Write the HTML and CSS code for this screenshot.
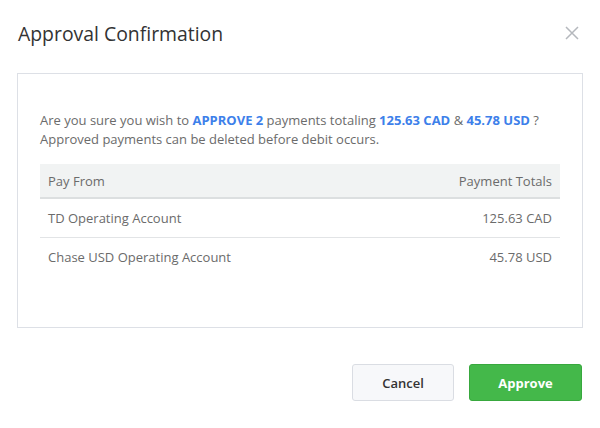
FILE: index.html
```html
<!DOCTYPE html>
<html lang="en">

<head>
  <meta charset="UTF-8">
  <meta name="viewport" content="width=device-width, initial-scale=1.0">
  <title>Approval Confirmation</title>
  <link rel="stylesheet" href="styles.css">
</head>

<body>
  <div class="modal">
    <div class="modal-header">
      <h1 class="modal-title">Approval Confirmation</h1>
      <button class="close-btn" aria-label="Close">
        <svg width="14" height="14" viewBox="0 0 14 14">
          <path d="M1 1 L13 13 M13 1 L1 13" stroke="#b5b8bd" stroke-width="1.5" fill="none" />
        </svg>
      </button>
    </div>

    <div class="modal-body">
      <p class="message">
        Are you sure you wish to <strong>APPROVE 2</strong> payments totaling <strong>125.63 CAD</strong> &amp; <strong>45.78 USD</strong> ?<br>
        Approved payments can be deleted before debit occurs.
      </p>

      <table class="totals">
        <thead>
          <tr>
            <th>Pay From</th>
            <th class="num">Payment Totals</th>
          </tr>
        </thead>
        <tbody>
          <tr>
            <td>TD Operating Account</td>
            <td class="num">125.63 CAD</td>
          </tr>
          <tr>
            <td>Chase USD Operating Account</td>
            <td class="num">45.78 USD</td>
          </tr>
        </tbody>
      </table>
    </div>

    <div class="modal-footer">
      <button class="btn btn-cancel">Cancel</button>
      <button class="btn btn-approve">Approve</button>
    </div>
  </div>
</body>

</html>
```

FILE: styles.css
```css
body, html {
  margin: 0;
  padding: 0;
  background: #fff;
  font-family: "Open Sans", Arial, sans-serif;
  color: #666;
}

.modal {
  padding: 0 17px 0 17px;
}

.modal-header {
  display: flex;
  align-items: center;
  justify-content: space-between;
  height: 66px;
  padding: 0 4px 0 1px;
}

.modal-title {
  margin: 0;
  font-size: 19.4px;
  font-weight: 400;
  color: #333;
}

.close-btn {
  background: none;
  border: none;
  padding: 0;
  width: 14px;
  height: 14px;
  cursor: pointer;
  display: flex;
}

.modal-body {
  margin-top: 7px;
  border: 1px solid #dde0e6;
  padding: 37px 22px 51px 22px;
}

.message {
  margin: 0 0 15px 0;
  font-size: 13px;
  line-height: 19px;
  color: #6b6b6b;
}

.message strong {
  color: #3d80ea;
  font-weight: 700;
}

.totals {
  width: 100%;
  border-collapse: collapse;
  font-size: 13px;
  color: #6b6b6b;
}

.totals th {
  background: #f1f3f3;
  font-weight: 400;
  text-align: left;
  height: 33px;
  padding: 0 8px;
  border-bottom: 2px solid #dcdfe0;
}

.totals td {
  height: 38px;
  padding: 0 8px;
  border-bottom: 1px solid #e2e4e6;
}

.totals tbody tr:last-child td {
  border-bottom: none;
}

.totals .num {
  text-align: right;
}

.modal-footer {
  display: flex;
  justify-content: flex-end;
  gap: 15px;
  margin-top: 36px;
  padding-right: 1px;
}

.btn {
  height: 37px;
  border-radius: 3px;
  font-family: "Open Sans", Arial, sans-serif;
  font-size: 13px;
  cursor: pointer;
}

.btn-cancel {
  width: 102px;
  background: #f7f8fa;
  border: 1px solid #dadde3;
  color: #333;
  font-weight: 600;
}

.btn-approve {
  width: 113px;
  background: #44b84a;
  border: 1px solid #38a83e;
  color: #fff;
  font-weight: 700;
}
```
